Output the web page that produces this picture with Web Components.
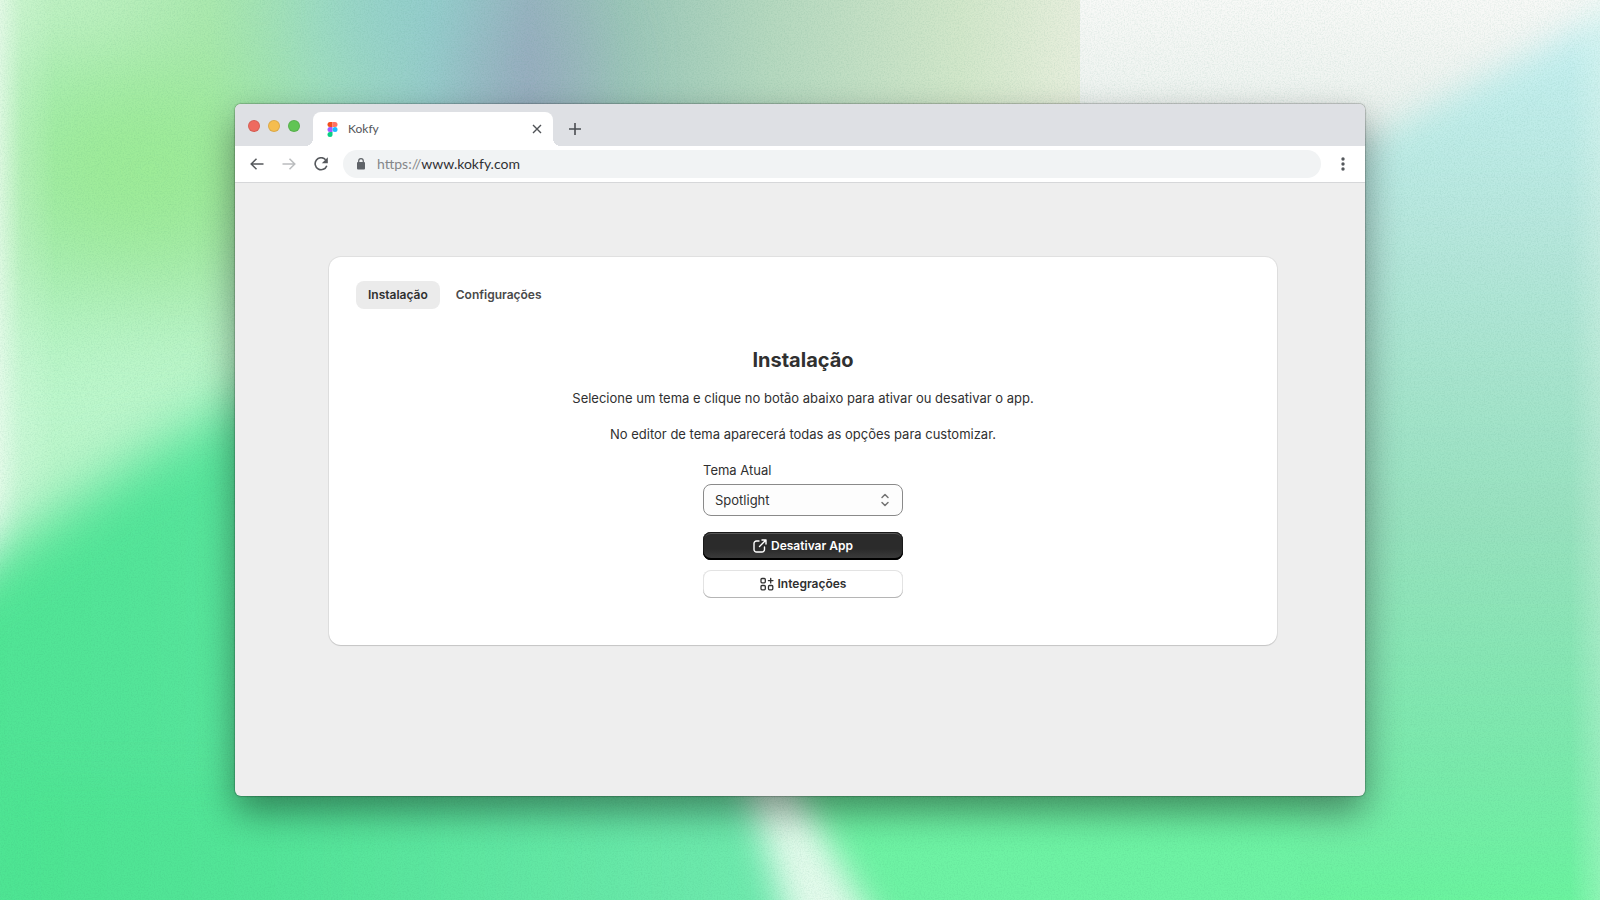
<!DOCTYPE html>
<html lang="pt-BR">
<head>
<meta charset="utf-8">
<title>Kokfy</title>
<style>
  body {
    margin: 0;
    font-family: Inter, "Liberation Sans", sans-serif;
    color: #303030;
  }
</style>
</head>
<body>
<gradient-backdrop>
  <browser-window>
    <browser-tab slot="tabs">Kokfy</browser-tab>
    <address-bar slot="toolbar" scheme="https://" host="www.kokfy.com"></address-bar>
    <app-card>
      <card-tabs slot="tabs"></card-tabs>
      <install-panel></install-panel>
    </app-card>
  </browser-window>
</gradient-backdrop>

<script>
class GradientBackdrop extends HTMLElement {
  constructor() {
    super();
    this.attachShadow({ mode: "open" });
  }

  get styles() {
    return `
      :host {
        display: flex;
        box-sizing: border-box;
        min-height: 100vh;
        padding: 104px 235px;
        position: relative;
        isolation: isolate;
        overflow: hidden;
      }

      .art {
        position: absolute;
        inset: 0;
        width: 100%;
        height: 100%;
        z-index: -1;
      }

      filter {
        color-interpolation-filters: sRGB;
      }
    `;
  }

  connectedCallback() {
    this.render();
  }

  render() {
    this.shadowRoot.innerHTML = `
      <style>${this.styles}</style>
      <svg class="art" viewBox="0 0 1600 900" preserveAspectRatio="none" aria-hidden="true">
        <defs>
          <filter id="soft" x="-50%" y="-50%" width="200%" height="200%"><feGaussianBlur stdDeviation="17"/></filter>
          <filter id="mid" x="-50%" y="-50%" width="200%" height="200%"><feGaussianBlur stdDeviation="28"/></filter>
          <filter id="wide" x="-80%" y="-80%" width="260%" height="260%"><feGaussianBlur stdDeviation="50"/></filter>
          <filter id="grain" x="0" y="0" width="100%" height="100%">
            <feTurbulence type="fractalNoise" baseFrequency="0.7" numOctaves="2" seed="4"/>
            <feColorMatrix values="0 0 0 0 0.2  0 0 0 0 0.5  0 0 0 0 0.4  1 0 0 0 -0.4"/>
          </filter>
          <linearGradient id="top">
            <stop offset="0" stop-color="#a9f0b2"/>
            <stop offset="0.13" stop-color="#a8e8ac"/>
            <stop offset="0.2" stop-color="#a0dec0"/>
            <stop offset="0.27" stop-color="#98cdcb"/>
            <stop offset="0.33" stop-color="#98b6c0"/>
            <stop offset="0.39" stop-color="#9cc7b9"/>
            <stop offset="0.48" stop-color="#b5d8bf"/>
            <stop offset="0.6" stop-color="#d2e7ca"/>
            <stop offset="0.67" stop-color="#e6eedb"/>
          </linearGradient>
          <linearGradient id="right" x1="0" y1="0" x2="0" y2="1">
            <stop offset="0" stop-color="#c9f2f6"/>
            <stop offset="0.25" stop-color="#b7e7dd"/>
            <stop offset="0.55" stop-color="#98e2bf"/>
            <stop offset="0.8" stop-color="#7aeaac"/>
            <stop offset="0.95" stop-color="#69f59e"/>
          </linearGradient>
          <linearGradient id="pale" x1="0" y1="0" x2="0" y2="1">
            <stop offset="0" stop-color="#f8f9f7"/>
            <stop offset="0.6" stop-color="#e9f0ec"/>
          </linearGradient>
          <linearGradient id="bottom">
            <stop offset="0" stop-color="#4de592"/>
            <stop offset="0.35" stop-color="#54e599"/>
            <stop offset="1" stop-color="#74ebb2"/>
          </linearGradient>
          <linearGradient id="left-glow">
            <stop offset="0" stop-color="#f4fdf5" stop-opacity="0.7"/>
            <stop offset="0.4" stop-color="#f4fdf5" stop-opacity="0.2"/>
            <stop offset="1" stop-color="#f4fdf5" stop-opacity="0"/>
          </linearGradient>
          <linearGradient id="right-glow" x1="1" x2="0">
            <stop offset="0" stop-color="#f4fdf5" stop-opacity="0.25"/>
            <stop offset="1" stop-color="#f4fdf5" stop-opacity="0"/>
          </linearGradient>
        </defs>
        <rect width="1600" height="900" fill="url(#top)"/>
        <g filter="url(#wide)">
          <path d="M-100 320L320 300V620H-100Z" fill="#bdf7cc"/>
          <ellipse cx="150" cy="170" rx="130" ry="90" fill="#9ceb96"/>
          <ellipse cx="40" cy="-10" rx="140" ry="40" fill="#d0f4d0"/>
          <ellipse cx="530" cy="75" rx="40" ry="50" fill="#98a0be"/>
          <ellipse cx="400" cy="0" rx="70" ry="40" fill="#90cfcf"/>
        </g>
        <rect x="1080" width="520" height="260" fill="url(#pale)"/>
        <path d="M1650 -10L1340 155L1200 300V960H1650Z" fill="url(#right)" filter="url(#soft)"/>
        <rect width="55" height="900" fill="url(#left-glow)"/>
        <path d="M-140 640C60 520 120 460 260 390H700V960H-140Z" fill="url(#bottom)" filter="url(#mid)"/>
        <path d="M600 700H1300V960H600Z" fill="#6ef3a4"/>
        <path d="M0 780H780L850 980H0Z" fill="url(#bottom)" filter="url(#soft)"/>
        <path d="M740 760H780L895 960H800Z" fill="#e6fbed" filter="url(#soft)"/>
        <rect x="1570" width="30" height="900" fill="url(#right-glow)"/>
        <rect width="1600" height="900" filter="url(#grain)" opacity="0.22"/>
      </svg>
      <slot></slot>
    `;
  }
}

class BrowserWindow extends HTMLElement {
  constructor() {
    super();
    this.attachShadow({ mode: "open" });
  }

  get styles() {
    return `
      :host {
        display: flex;
        flex: 1;
        flex-direction: column;
        min-width: 0;
        background: #eee;
        border-radius: 6px;
        box-shadow: 0 0 1px 1px rgba(0, 0, 0, 0.2), 0 16px 36px rgba(0, 0, 0, 0.42);
      }

      .strip {
        display: flex;
        align-items: flex-end;
        height: 42px;
        background: #dee0e4;
        border-radius: 6px 6px 0 0;
      }

      .lights {
        display: flex;
        align-self: center;
        gap: 8px;
        padding: 2px 13px 0;
      }

      .lights button {
        width: 12px;
        height: 12px;
        padding: 0;
        border: 1px solid rgba(0, 0, 0, 0.1);
        border-radius: 50%;
        background: var(--light);
      }

      .new-tab {
        display: flex;
        width: 28px;
        height: 34px;
        margin-left: 8px;
        padding: 0;
        align-items: center;
        justify-content: center;
        border: 0;
        background: none;
      }

      main {
        flex: 1;
        padding: 74px 88px 74px 94px;
      }
    `;
  }

  connectedCallback() {
    this.render();
  }

  render() {
    this.shadowRoot.innerHTML = `
      <style>${this.styles}</style>
      <div class="strip">
        <div class="lights">
          <button style="--light: #ee6a5f" aria-label="Fechar"></button>
          <button style="--light: #f5bd4f" aria-label="Minimizar"></button>
          <button style="--light: #61c454" aria-label="Maximizar"></button>
        </div>
        <slot name="tabs"></slot>
        <button class="new-tab" aria-label="Nova guia">
          <svg width="14" height="14" viewBox="0 0 14 14" fill="none" stroke="#4a4d51" stroke-width="1.6"><path d="M7 1v12M1 7h12"/></svg>
        </button>
      </div>
      <slot name="toolbar"></slot>
      <main><slot></slot></main>
    `;
  }
}

class BrowserTab extends HTMLElement {
  constructor() {
    super();
    this.attachShadow({ mode: "open" });
  }

  get styles() {
    return `
      :host {
        display: flex;
        position: relative;
        box-sizing: border-box;
        align-items: center;
        width: 240px;
        height: 34px;
        padding: 0 8px 0 14px;
        background: #fff;
        border-radius: 8px 8px 0 0;
        font: 12px/16px Lato, sans-serif;
        color: #54565a;
      }

      /* flared feet of the active tab */
      :host::before,
      :host::after {
        content: "";
        position: absolute;
        bottom: 0;
        width: 8px;
        height: 8px;
      }
      :host::before {
        right: 100%;
        background: radial-gradient(circle at 0 0, transparent 8px, #fff 8px);
      }
      :host::after {
        left: 100%;
        background: radial-gradient(circle at 100% 0, transparent 8px, #fff 8px);
      }

      .title {
        flex: 1;
        padding-left: 10px;
      }

      button {
        display: flex;
        width: 16px;
        height: 16px;
        padding: 0;
        align-items: center;
        justify-content: center;
        border: 0;
        background: none;
      }
    `;
  }

  connectedCallback() {
    this.render();
  }

  render() {
    this.shadowRoot.innerHTML = `
      <style>${this.styles}</style>
      <svg width="11" height="15" viewBox="0 0 10 15" aria-hidden="true">
        <path fill="#f24e1e" d="M2.5 0H5v5H2.5a2.5 2.5 0 0 1 0-5z"/>
        <path fill="#ff7262" d="M5 0h2.5a2.5 2.5 0 0 1 0 5H5z"/>
        <path fill="#a259ff" d="M2.5 5H5v5H2.5a2.5 2.5 0 0 1 0-5z"/>
        <circle fill="#1abcfe" cx="7.5" cy="7.5" r="2.5"/>
        <path fill="#0acf83" d="M2.5 10H5v2.5A2.5 2.5 0 1 1 2.5 10z"/>
      </svg>
      <span class="title"><slot></slot></span>
      <button aria-label="Fechar guia">
        <svg width="10" height="10" viewBox="0 0 10 10" fill="none" stroke="#4f5256" stroke-width="1.4"><path d="M1 1l8 8M9 1l-8 8"/></svg>
      </button>
    `;
  }
}

class AddressBar extends HTMLElement {
  constructor() {
    super();
    this.attachShadow({ mode: "open" });
  }

  get styles() {
    return `
      :host {
        display: flex;
        align-items: center;
        height: 36px;
        padding: 0 12px;
        background: #fff;
        border-bottom: 1px solid #d6d7d9;
      }

      button {
        display: flex;
        width: 20px;
        height: 20px;
        margin-right: 12px;
        padding: 0;
        align-items: center;
        justify-content: center;
        border: 0;
        background: none;
      }

      .menu {
        margin: 0 0 0 12px;
      }

      .field {
        display: flex;
        flex: 1;
        align-items: center;
        gap: 10px;
        height: 28px;
        padding: 0 12px;
        background: #f1f3f4;
        border-radius: 14px;
      }

      .url {
        font: 14px/20px Lato, sans-serif;
        color: #303134;
        text-decoration: none;
      }

      .scheme {
        color: #85878a;
      }
    `;
  }

  connectedCallback() {
    this.render();
  }

  render() {
    this.shadowRoot.innerHTML = `
      <style>${this.styles}</style>
      <button aria-label="Voltar">
        <svg width="14" height="12" viewBox="0 0 14 12" fill="none" stroke="#55585c" stroke-width="1.5"><path d="M13.5 6h-12M6.5 .7L1.2 6l5.3 5.3"/></svg>
      </button>
      <button aria-label="Avançar">
        <svg width="14" height="12" viewBox="0 0 14 12" fill="none" stroke="#babcbe" stroke-width="1.5"><path d="M.5 6h12M7.5 .7L12.8 6l-5.3 5.3"/></svg>
      </button>
      <button aria-label="Recarregar">
        <svg width="14" height="14" viewBox="0 0 14 14" fill="none"><path d="M11.6 2.7A6 6 0 1 0 12.8 8.7" stroke="#55585c" stroke-width="1.6"/><path d="M13.8 .2v6h-6z" fill="#55585c"/></svg>
      </button>
      <div class="field">
        <svg width="12" height="12" viewBox="0 0 12 12" fill="none" aria-hidden="true"><rect x="2" y="4" width="8" height="7.5" rx="1" fill="#5f6368"/><path d="M3.7 4.5V3a2.3 2.3 0 0 1 4.6 0v1.5" stroke="#5f6368" stroke-width="1.2"/></svg>
        <a class="url" href="#"><span class="scheme">${this.getAttribute("scheme")}</span>${this.getAttribute("host")}</a>
      </div>
      <button class="menu" aria-label="Menu">
        <svg width="4" height="14" viewBox="0 0 4 14" fill="#55585c"><circle cx="2" cy="2" r="1.7"/><circle cx="2" cy="7" r="1.7"/><circle cx="2" cy="12" r="1.7"/></svg>
      </button>
    `;
  }
}

class AppCard extends HTMLElement {
  constructor() {
    super();
    this.attachShadow({ mode: "open" });
  }

  get styles() {
    return `
      :host {
        display: block;
        padding: 24px 27px 47px;
        background: #fff;
        border-radius: 12px;
        box-shadow: 0 0 0 1px rgba(0, 0, 0, 0.06), 0 1px 1px rgba(0, 0, 0, 0.12);
      }
    `;
  }

  connectedCallback() {
    this.render();
  }

  render() {
    this.shadowRoot.innerHTML = `
      <style>${this.styles}</style>
      <slot name="tabs"></slot>
      <slot></slot>
    `;
  }
}

class CardTabs extends HTMLElement {
  constructor() {
    super();
    this.attachShadow({ mode: "open" });
  }

  get styles() {
    return `
      :host {
        display: flex;
        gap: 4px;
      }

      button {
        height: 28px;
        padding: 0 12px;
        border: 0;
        border-radius: 8px;
        background: none;
        font: 600 12px/16px Inter, sans-serif;
        color: #4a4a4a;
      }

      button[aria-selected="true"] {
        background: #ebebeb;
        color: #303030;
      }
    `;
  }

  connectedCallback() {
    this.render();
  }

  render() {
    this.shadowRoot.innerHTML = `
      <style>${this.styles}</style>
      <button role="tab" aria-selected="true">Instalação</button>
      <button role="tab" aria-selected="false">Configurações</button>
    `;
  }
}

class InstallPanel extends HTMLElement {
  constructor() {
    super();
    this.attachShadow({ mode: "open" });
  }

  get styles() {
    return `
      :host {
        display: flex;
        flex-direction: column;
        align-items: center;
        gap: 16px;
        padding-top: 39px;
        font-size: 13px;
        line-height: 20px;
      }

      h1 {
        margin: 0;
        font-size: 20px;
        line-height: 24px;
        font-weight: 700;
      }

      p {
        margin: 0;
      }

      form {
        display: flex;
        flex-direction: column;
        width: 200px;
      }

      label {
        margin-bottom: 4px;
      }

      .select {
        display: grid;
        align-items: center;
        margin-bottom: 16px;
      }
      .select > * {
        grid-area: 1 / 1;
      }
      .select svg {
        justify-self: end;
        margin-right: 13px;
        pointer-events: none;
      }

      select {
        appearance: none;
        box-sizing: border-box;
        width: 100%;
        height: 32px;
        padding: 0 11px;
        border: 1px solid #8a8a8a;
        border-radius: 8px;
        background: #fdfdfd;
        font: 13px/20px Inter, sans-serif;
        color: #303030;
      }

      button {
        display: flex;
        align-items: center;
        justify-content: center;
        gap: 4px;
        height: 28px;
        padding: 0 12px;
        border: 0;
        border-radius: 8px;
        background: #fff;
        box-shadow: inset 0 -1px 0 #b5b5b5, inset 0 0 0 1px #e3e3e3;
        font: 600 12px/16px Inter, sans-serif;
        color: #303030;
      }

      .primary {
        margin-bottom: 10px;
        background: linear-gradient(#2b2b2b 60%, #3d3d3d);
        box-shadow: inset 0 -2px 0 #000, inset 0 0 0 1px #1a1a1a, inset 0 2px 0 #575757;
        color: #fff;
      }
    `;
  }

  connectedCallback() {
    this.render();
  }

  render() {
    this.shadowRoot.innerHTML = `
      <style>${this.styles}</style>
      <h1>Instalação</h1>
      <p>Selecione um tema e clique no botão abaixo para ativar ou desativar o app.</p>
      <p>No editor de tema aparecerá todas as opções para customizar.</p>
      <form>
        <label for="theme">Tema Atual</label>
        <div class="select">
          <select id="theme"><option>Spotlight</option></select>
          <svg width="10" height="14" viewBox="0 0 10 14" fill="none" stroke="#747474" stroke-width="1.5" stroke-linecap="round" stroke-linejoin="round"><path d="M2 4.5l3-3 3 3M2 9.5l3 3 3-3"/></svg>
        </div>
        <button type="button" class="primary">
          <svg width="14" height="14" viewBox="0 0 14 14" fill="none" stroke="currentColor" stroke-width="1.4" stroke-linecap="round" stroke-linejoin="round"><path d="M6 2H3.5A2.5 2.5 0 0 0 1 4.5v6A2.5 2.5 0 0 0 3.5 13H9a2.5 2.5 0 0 0 2.5-2.5V8M9 1h4v4M13 1L6.5 7.5"/></svg>
          Desativar App
        </button>
        <button type="button">
          <svg width="14" height="14" viewBox="0 0 14 14" fill="none" stroke="currentColor" stroke-width="1.3" stroke-linecap="round"><rect x="1" y="1.5" width="4.3" height="4.3" rx="1"/><rect x="1" y="8.5" width="4.3" height="4.3" rx="1"/><rect x="8.5" y="8.5" width="4.3" height="4.3" rx="1"/><path d="M10.7 1.3v4.6M8.4 3.6H13"/></svg>
          Integrações
        </button>
      </form>
    `;
  }
}

customElements.define("gradient-backdrop", GradientBackdrop);
customElements.define("browser-window", BrowserWindow);
customElements.define("browser-tab", BrowserTab);
customElements.define("address-bar", AddressBar);
customElements.define("app-card", AppCard);
customElements.define("card-tabs", CardTabs);
customElements.define("install-panel", InstallPanel);
</script>
</body>
</html>
